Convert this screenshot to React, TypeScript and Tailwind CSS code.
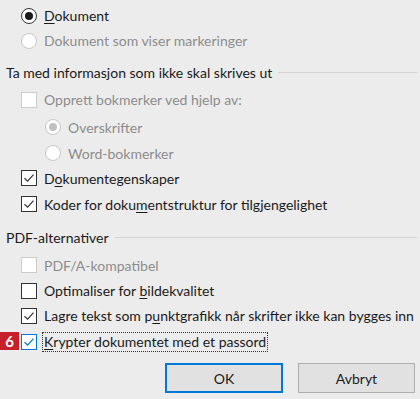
import type { ReactNode } from 'react';

const font = { fontFamily: 'Lato, "Noto Sans", sans-serif' };

function Radio({ checked, disabled }: { checked?: boolean; disabled?: boolean }) {
  return (
    <span
      className={`flex h-4 w-4 shrink-0 items-center justify-center rounded-full border bg-white ${
        disabled ? 'border-[#c6c6c6]' : 'border-[#333333]'
      }`}
    >
      {checked && <span className={`h-2 w-2 rounded-full ${disabled ? 'bg-[#c0c0c0]' : 'bg-[#1a1a1a]'}`} />}
    </span>
  );
}

function Check({ checked, disabled, focus }: { checked?: boolean; disabled?: boolean; focus?: boolean }) {
  const border = focus ? 'border-[#0078d7]' : disabled ? 'border-[#cccccc]' : 'border-[#333333]';
  const stroke = focus ? '#0078d7' : '#333333';
  return (
    <span className={`flex h-4 w-4 shrink-0 items-center justify-center border bg-white ${border}`}>
      {checked && (
        <svg width="12" height="12" viewBox="0 0 12 12">
          <path d="M1.5 6.2 L4.6 9.2 L10.5 2.6" fill="none" stroke={stroke} strokeWidth="1.2" />
        </svg>
      )}
    </span>
  );
}

function Row({ children, control, indent, className }: { children: ReactNode; control: ReactNode; indent?: boolean; className?: string }) {
  return (
    <div className={`flex items-center gap-[7px] ${indent ? 'pl-[45px]' : 'pl-[21px]'} ${className ?? ''}`}>
      {control}
      <span className="whitespace-nowrap">{children}</span>
    </div>
  );
}

function Header({ children, className }: { children: ReactNode; className?: string }) {
  return (
    <div className={`flex items-center gap-[6px] pl-[6px] pr-[3px] text-[#1a1a1a] ${className ?? ''}`}>
      <span className="whitespace-nowrap">{children}</span>
      <span className="h-px flex-1 bg-[#d4d4d4]" />
    </div>
  );
}

export default function App() {
  const gray = 'text-[#8c8c8c]';
  return (
    <div className="h-[399px] w-[420px] overflow-hidden bg-[#ececec] text-[14px] text-[#1a1a1a]" style={font}>
      <div className="flex flex-col pt-[3px]">
        <Row control={<Radio checked />} className="h-[25px]">
          <span className="underline underline-offset-2">D</span>okument
        </Row>
        <Row control={<Radio disabled />} className={`h-[25px] ${gray}`}>
          Dokument som viser markeringer
        </Row>

        <Header className="mt-[7px] h-[24px]">Ta med informasjon som ikke skal skrives ut</Header>

        <Row control={<Check disabled />} className={`mt-[3px] h-[25px] ${gray}`}>
          Opprett bokmerker ved hjelp av:
        </Row>
        <Row indent control={<Radio checked disabled />} className={`mt-[2px] h-[26px] ${gray}`}>
          Overskrifter
        </Row>
        <Row indent control={<Radio disabled />} className={`h-[26px] ${gray}`}>
          Word-bokmerker
        </Row>
        <Row control={<Check checked />} className="h-[24px]">
          D<span className="underline underline-offset-2">o</span>kumentegenskaper
        </Row>
        <Row control={<Check checked />} className="mt-px h-[26px]">
          Koder for doku<span className="underline underline-offset-2">m</span>entstruktur for tilgjengelighet
        </Row>

        <Header className="mt-[8px] h-[24px]">PDF-alternativer</Header>

        <Row control={<Check disabled />} className={`mt-[3px] h-[26px] ${gray}`}>
          PDF/A-kompatibel
        </Row>
        <Row control={<Check />} className="h-[25px]">
          Optimaliser for <span className="underline underline-offset-2">b</span>ildekvalitet
        </Row>
        <Row control={<Check checked />} className="h-[25px]">
          Lagre tekst som p<span className="underline underline-offset-2">u</span>nktgrafikk når skrifter ikke kan bygges inn
        </Row>

        <div className="relative mt-px flex h-[26px] items-center gap-[5px] pl-[21px]">
          <span className="absolute left-0 top-[3px] flex h-[18px] w-[19px] items-center justify-center bg-[#c8202a] text-[15px] font-bold leading-none text-white">
            6
          </span>
          <Check checked focus />
          <span className="whitespace-nowrap border border-dotted border-[#333333] px-px leading-[18px]">
            <span className="underline underline-offset-2">K</span>rypter dokumentet med et passord
          </span>
        </div>

        <div className="mt-[8px] flex justify-end gap-[15px] pr-[5px]">
          <button className="h-[30px] w-[118px] border-2 border-[#0078d7] bg-[#e1e1e1] text-[#1a1a1a]">OK</button>
          <button className="h-[30px] w-[117px] border border-[#adadad] bg-[#e1e1e1] text-[#1a1a1a]">Avbryt</button>
        </div>
      </div>
    </div>
  );
}
